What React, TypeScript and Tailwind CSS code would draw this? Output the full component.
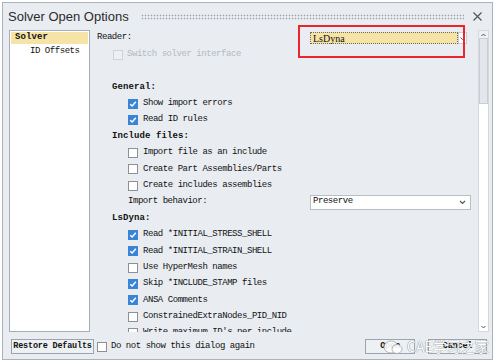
import React from 'react'

const mono = "font-['Liberation_Mono','Courier_New',monospace] text-[9px] tracking-[-0.45px] text-[#111]"

function Box({ checked = false, disabled = false }: { checked?: boolean; disabled?: boolean }) {
  if (checked) {
    return (
      <span className="w-[10px] h-[10px] shrink-0 bg-[#3a84d6] border border-[#3a84d6] flex items-center justify-center">
        <svg width="8" height="8" viewBox="0 0 8 8">
          <path d="M1.2 4.2 L3.2 6 L6.8 1.8" fill="none" stroke="white" strokeWidth="1.5" />
        </svg>
      </span>
    )
  }
  return (
    <span
      className={
        'w-[10px] h-[10px] shrink-0 border ' +
        (disabled ? 'border-[#cfd3d8] bg-[#eef1f4]' : 'border-[#8c8f93] bg-white')
      }
    />
  )
}

function Row({ children, className = '' }: { children?: React.ReactNode; className?: string }) {
  return <div className={'h-[16.4px] shrink-0 flex items-center ' + className}>{children}</div>
}

function Check({ label, checked }: { label: string; checked?: boolean }) {
  return (
    <Row className="pl-[33px] gap-[5px]">
      <Box checked={checked} />
      <span className={mono + ' whitespace-nowrap'}>{label}</span>
    </Row>
  )
}

function Heading({ label }: { label: string }) {
  return (
    <Row className="pl-[17px]">
      <span className={mono + ' font-bold tracking-[0.1px]'}>{label}</span>
    </Row>
  )
}

function Button({ label, width }: { label: string; width: string }) {
  return (
    <div className={width + ' h-[15px] shrink-0 border border-[#9ea4ab] bg-[#eef1f4] flex items-center justify-center'}>
      <span className="font-['Liberation_Mono','Courier_New',monospace] font-bold text-[8.5px] tracking-[-0.2px] text-[#111] whitespace-nowrap">
        {label}
      </span>
    </div>
  )
}

export default function App() {
  return (
    <div className="w-[495px] h-[363px] bg-white p-[2px] pb-[3px]">
      <div className="relative w-[491px] h-[358px] border border-[#aab2bc] bg-[#e9edf2] flex flex-col">
        {/* title bar */}
        <div className="h-[27px] shrink-0 flex items-center pl-[5px] pr-[6px]">
          <span className="font-['Liberation_Sans',Arial,sans-serif] text-[13px] text-[#2b2b2b]">
            Solver Open Options
          </span>
          <div className="flex-1 ml-[12px] mr-[8px] h-[6px] bg-[radial-gradient(circle,#9aa3ad_0.7px,transparent_1.1px)] bg-[length:3px_3px]" />
          <svg width="11" height="11" viewBox="0 0 11 11" className="mr-[3px]">
            <path d="M1.5 1.5 L9.5 9.5 M9.5 1.5 L1.5 9.5" stroke="#555" strokeWidth="1.2" />
          </svg>
        </div>

        {/* body */}
        <div className="h-[302px] shrink-0 flex pl-[6px] pr-[2px]">
          <div className="w-[81px] h-full border border-[#a7adb4] bg-white pt-[1px] px-[1px]">
            <div className="h-[12px] bg-[#f6e3a6] flex items-center pl-[4px]">
              <span className={mono + ' font-bold tracking-[0.1px]'}>Solver</span>
            </div>
            <div className="h-[16px] flex items-center pl-[19px]">
              <span className={mono}>ID Offsets</span>
            </div>
          </div>

          <div className="w-[382px] ml-[5px] h-full overflow-hidden">
            <div className="flex flex-col">
              <Row className="pl-[2px]">
                <span className={mono + ' w-[213px]'}>Reader:</span>
                <div className="flex items-center">
                  <div className="w-[148px] h-[12px] bg-[#f6e3a6] border border-dotted border-[#6b6b6b] flex items-center pl-[2px]">
                    <span className="font-['Liberation_Serif','Times_New_Roman',serif] text-[10px] text-[#111]">LsDyna</span>
                  </div>
                  <div className="w-[9px] h-[12px] bg-white border border-[#c9cdd2] flex items-center justify-center">
                    <svg width="5" height="5" viewBox="0 0 5 5">
                      <path d="M0.5 1.5 L2.5 3.5 L4.5 1.5" fill="none" stroke="#555" strokeWidth="1" />
                    </svg>
                  </div>
                </div>
              </Row>
              <Row className="pl-[18px] gap-[4px]">
                <Box disabled />
                <span className={mono + ' text-[#b5b9be]'}>Switch solver interface</span>
              </Row>
              <Row />
              <Heading label="General:" />
              <Check label="Show import errors" checked />
              <Check label="Read ID rules" checked />
              <Heading label="Include files:" />
              <Check label="Import file as an include" />
              <Check label="Create Part Assemblies/Parts" />
              <Check label="Create includes assemblies" />
              <Row className="pl-[33px]">
                <span className={mono + ' w-[182px]'}>Import behavior:</span>
                <div className="w-[161px] h-[15px] bg-white border border-[#b9bec4] flex items-center justify-between pl-[2px] pr-[4px]">
                  <span className={mono}>Preserve</span>
                  <svg width="7" height="5" viewBox="0 0 7 5">
                    <path d="M1 1 L3.5 3.5 L6 1" fill="none" stroke="#555" strokeWidth="1.2" />
                  </svg>
                </div>
              </Row>
              <Heading label="LsDyna:" />
              <Check label="Read *INITIAL_STRESS_SHELL" checked />
              <Check label="Read *INITIAL_STRAIN_SHELL" checked />
              <Check label="Use HyperMesh names" />
              <Check label="Skip *INCLUDE_STAMP files" checked />
              <Check label="ANSA Comments" checked />
              <Check label="ConstrainedExtraNodes_PID_NID" />
              <Check label="Write maximum ID's per include" />
            </div>
          </div>

          {/* scrollbar */}
          <div className="w-[11px] h-full ml-[1px] border border-[#d5d9de] bg-white flex flex-col">
            <div className="h-[7px] shrink-0 bg-[#eef0f3] flex items-center justify-center">
              <svg width="5" height="4" viewBox="0 0 5 4">
                <path d="M0.5 3 L2.5 1 L4.5 3" fill="none" stroke="#555" strokeWidth="1" />
              </svg>
            </div>
            <div className="h-[66px] shrink-0 bg-[#e3e6ea] border border-[#c9ced4]" />
            <div className="flex-1" />
            <div className="h-[8px] shrink-0 flex items-center justify-center">
              <svg width="5" height="4" viewBox="0 0 5 4">
                <path d="M0.5 1 L2.5 3 L4.5 1" fill="none" stroke="#555" strokeWidth="1" />
              </svg>
            </div>
          </div>
        </div>

        {/* footer */}
        <div className="mt-[7px] h-[15px] flex items-center pl-[8px] pr-[5px]">
          <Button label="Restore Defaults" width="w-[83px]" />
          <div className="ml-[3px] flex items-center gap-[4px]">
            <Box />
            <span className={mono + ' text-[9.5px] whitespace-nowrap'}>Do not show this dialog again</span>
          </div>
          <div className="flex-1" />
          <Button label="Open" width="w-[50px]" />
          <div className="w-[13px]" />
          <Button label="Cancel" width="w-[59px]" />
        </div>

        {/* red annotation box */}
        <div className="absolute left-[295px] top-[22px] w-[167px] h-[33px] border-2 border-[#e8262c]" />

        {/* watermark */}
        <div className="absolute left-[380px] top-[333px] flex items-center gap-[4px] opacity-90">
          <svg width="20" height="16" viewBox="0 0 20 16">
            <ellipse cx="8" cy="8" rx="7" ry="6" fill="white" stroke="#9aa0a6" strokeWidth="0.8" />
            <ellipse cx="14" cy="10" rx="5" ry="4.5" fill="white" stroke="#9aa0a6" strokeWidth="0.8" />
          </svg>
          <span className="font-['Noto_Sans_CJK_SC','Noto_Sans',sans-serif] text-[14px] text-white [text-shadow:0_0_1px_#7b8289,0_0_1px_#7b8289]">
            CAE学习之家
          </span>
        </div>
      </div>
    </div>
  )
}
